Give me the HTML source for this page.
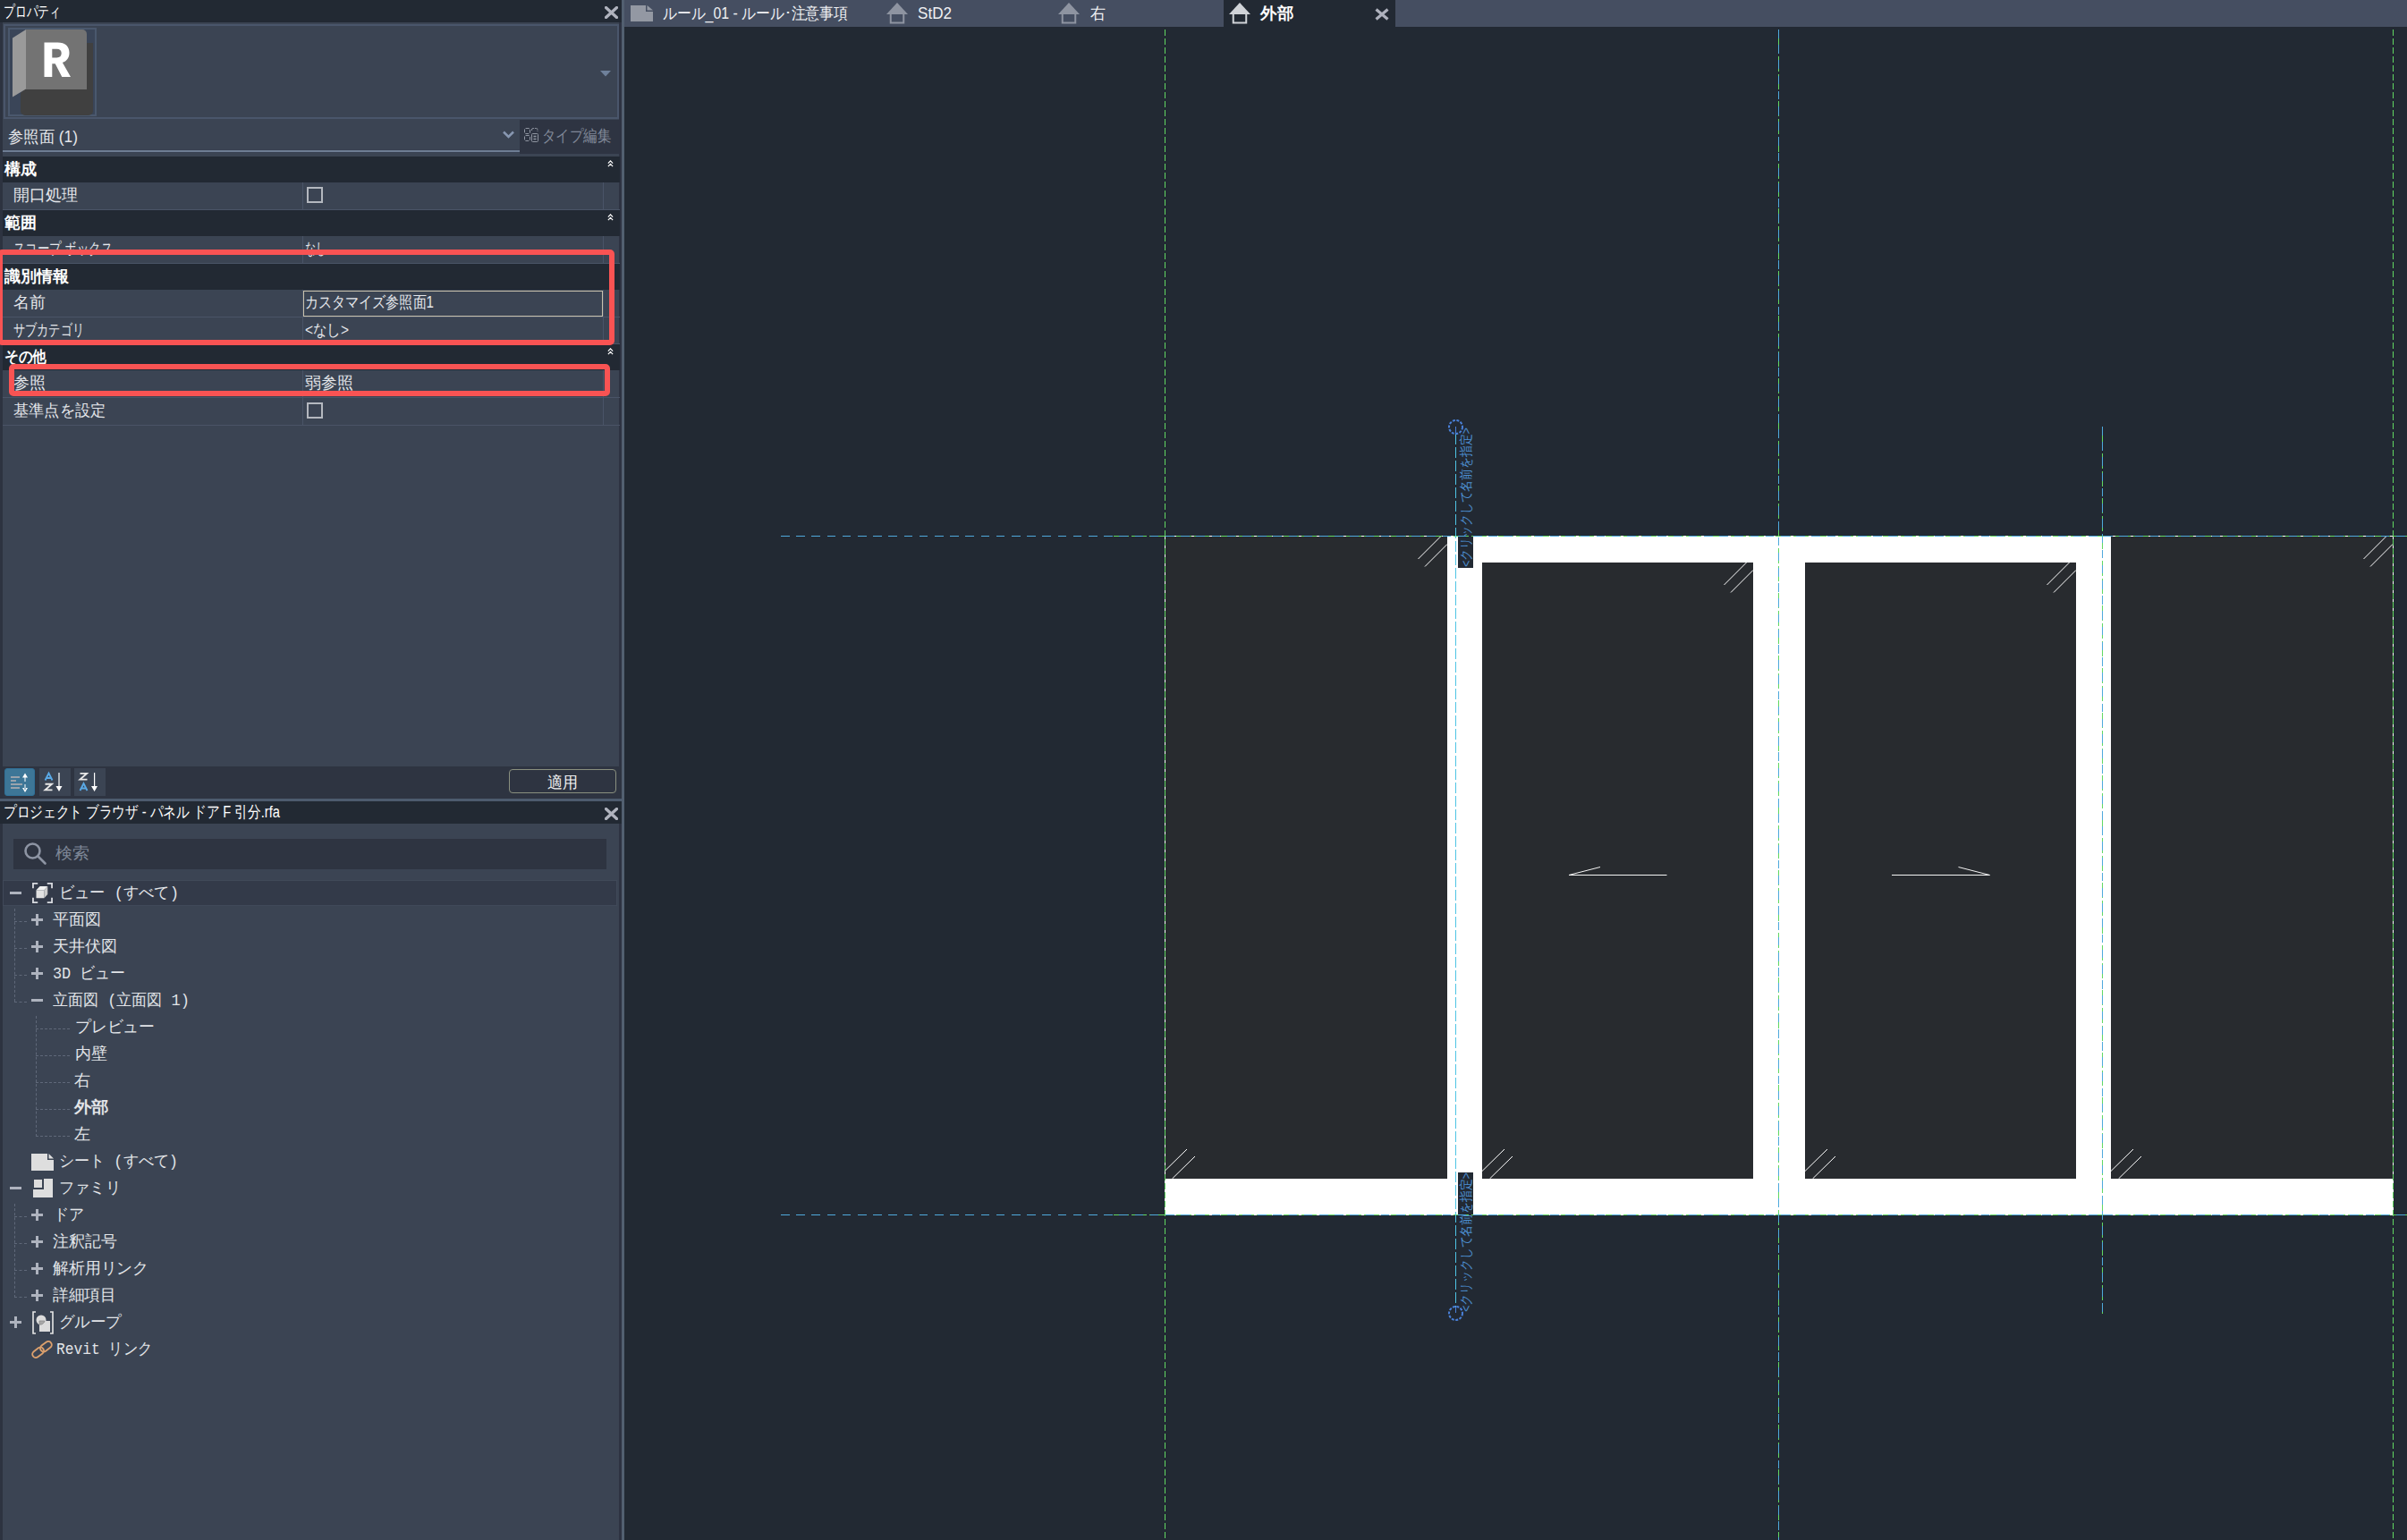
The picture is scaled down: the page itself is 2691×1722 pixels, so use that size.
<!DOCTYPE html>
<html lang="ja"><head><meta charset="utf-8"><title>Revit</title>
<style>
*{box-sizing:border-box;margin:0;padding:0}
html,body{width:2691px;height:1722px;overflow:hidden;background:#222933}
body{position:relative;font-family:"Liberation Sans",sans-serif;font-size:18px;color:#e4e6ea}
.abs,.abs *{position:absolute}
.t{white-space:nowrap;line-height:26px;height:26px;transform-origin:0 50%}
.b{font-weight:bold;color:#fff}
.m{font-family:"Liberation Mono","Liberation Sans",monospace;color:#e2e4e8}
.dark{background:#222933}
.hdr{left:3px;width:690px;height:29px;background:#222933}
.chev{left:676px;top:3px;width:7px;height:10px}
.row{left:3px;width:690px;border-bottom:1px solid #4a5467}
.row i{top:0;width:1px;height:30px;background:#4a5467}
.cb{width:18px;height:18px;border:2px solid #b4b8bf}
.pm{width:13px;height:13px}
.pm i{left:0;top:5px;width:13px;height:3px;background:#aeb3be}
.pm b{left:5px;top:0;width:3px;height:13px;background:#aeb3be}
.dv{width:0;border-left:1px dashed #5f6879}
.dh{height:0;border-top:1px dashed #5f6879}
</style></head><body>
<div class="abs" style="left:0;top:0;width:2691px;height:1722px;overflow:hidden">
<div style="left:0;top:0;width:698px;height:1722px;background:#3b4453;overflow:hidden">
<div style="left:0;top:0;width:3px;height:1722px;background:#2d3340"></div>
<div style="left:692px;top:0;width:3px;height:1722px;background:#2e3342"></div>
<div style="left:695px;top:0;width:3px;height:1722px;background:#525f70"></div>
<div class="dark" style="left:0;top:0;width:695px;height:25px"></div>
<div class="t" id="t0" style="left:4px;top:0px;transform:scaleX(0.711);color:#fff">プロパティ</div>
<svg style="left:676px;top:7px" width="15" height="14" viewBox="0 0 15 14"><path d="M1.500 1.500L13.500 12.500M13.500 1.500L1.500 12.500" stroke="#b0b3be" stroke-width="3.300" stroke-linecap="round"/></svg>
<div style="left:4px;top:27px;width:688px;height:106px;border:2px solid #4a566b"></div>
<div style="left:9px;top:31px;width:99px;height:99px;border:2px solid #4a586d;background:#3a4558"></div>
<svg style="left:9px;top:31px" width="99" height="99" viewBox="9 31 99 99">
 <path d="M27 100H97V48H104V124a5 5 0 0 1-5 5H28a5 5 0 0 1-5-5V104z" fill="#404040"/>
 <path d="M29 33H92a5 5 0 0 1 5 5V100H29z" fill="#737373"/>
 <path d="M14 42.500L29 33V99.500L14 108.500z" fill="#9a9a9a"/>
 <path d="M49.500 86V47.500H64.500c8.500 0 13 4.300 13 11.500c0 5.800-3 9.400-7.600 10.900L79 86H69.300L61.700 71.300H58.300V86zM58.300 64.500H63.500c3.400 0 5.200-1.700 5.200-4.900c0-3.200-1.800-4.800-5.200-4.800H58.300z" fill="#fff"/>
</svg>
<svg style="left:671px;top:79px" width="12" height="7" viewBox="0 0 12 7"><path d="M0 0H12L6 6.500z" fill="#6f819b"/></svg>
<div class="t" id="t1" style="left:9px;top:140px;transform:scaleX(0.963);">参照面 (1)</div>
<svg style="left:562px;top:146px" width="13" height="9" viewBox="0 0 13 9"><path d="M1 1.500L6.500 7L12 1.500" stroke="#8797b1" stroke-width="2.500" fill="none"/></svg>
<div style="left:3px;top:167px;width:578px;height:4px;background:#384051"></div><div style="left:3px;top:168px;width:578px;height:2px;background:#6e7d93"></div>
<div style="left:581px;top:134px;width:111px;height:38px;background:#2e3442"></div>
<svg style="left:585px;top:142px" width="18" height="18" viewBox="0 0 18 18" fill="none" stroke="#9096a2" stroke-width="1"><rect x="1.500" y="1.500" width="6" height="6" rx="1.500" stroke-dasharray="4 1"/><rect x="1.500" y="9.500" width="6" height="6" rx="1.500" stroke-dasharray="4 1"/><path d="M9.500 4V3a1.500 1.500 0 0 1 1.500-1.500h3.500a1.500 1.500 0 0 1 1.500 1.500v2" stroke-dasharray="4 1"/><rect x="9.500" y="7.500" width="7" height="9" rx="1"/><path d="M11.500 10.500H14.500M11.500 13.500H14.500" stroke-width="1.300"/></svg>
<div class="t" id="t2" style="left:606px;top:139px;transform:scaleX(0.856);color:#808898">タイプ編集</div>
<div class="hdr" style="top:175px"><svg class="chev" viewBox="0 0 8 10"><path d="M1 4.500L4 1.500L7 4.500M1 8.500L4 5.500L7 8.500" stroke="#fff" stroke-width="1.400" fill="none"/></svg></div>
<div class="t b" id="t3" style="left:5px;top:176px;">構成</div>
<div class="row" style="top:204px;height:31px"><i style="left:335px"></i><i style="left:671px"></i><div class="cb" style="left:340px;top:5px"></div></div>
<div class="t" id="t4" style="left:15px;top:205px;">開口処理</div>
<div class="hdr" style="top:235px"><svg class="chev" viewBox="0 0 8 10"><path d="M1 4.500L4 1.500L7 4.500M1 8.500L4 5.500L7 8.500" stroke="#fff" stroke-width="1.400" fill="none"/></svg></div>
<div class="t b" id="t5" style="left:5px;top:236px;">範囲</div>
<div class="row" style="top:264px;height:31px"><i style="left:335px"></i><i style="left:671px"></i></div>
<div class="t" id="t6" style="left:15px;top:265px;transform:scaleX(0.745);">スコープ ボックス</div>
<div class="t" id="t7" style="left:341px;top:265px;transform:scaleX(0.667);">なし</div>
<div class="hdr" style="top:295px"></div>
<div class="t b" id="t8" style="left:5px;top:296px;">識別情報</div>
<div class="row" style="top:324px;height:31px"><i style="left:335px"></i><i style="left:671px"></i></div>
<div class="t" id="t9" style="left:15px;top:325px;">名前</div>
<div class="t" id="t10" style="left:341px;top:325px;transform:scaleX(0.837);">カスタマイズ参照面1</div>
<div class="row" style="top:355px;height:30px"><i style="left:335px"></i><i style="left:671px"></i></div>
<div class="t" id="t11" style="left:15px;top:356px;transform:scaleX(0.731);">サブカテゴリ</div>
<div class="t" id="t12" style="left:341px;top:356px;transform:scaleX(0.859);">&lt;なし&gt;</div>
<div class="hdr" style="top:385px"><svg class="chev" viewBox="0 0 8 10"><path d="M1 4.500L4 1.500L7 4.500M1 8.500L4 5.500L7 8.500" stroke="#fff" stroke-width="1.400" fill="none"/></svg></div>
<div class="t b" id="t13" style="left:5px;top:386px;transform:scaleX(0.870);">その他</div>
<div class="row" style="top:414px;height:31px"><i style="left:335px"></i><i style="left:671px"></i></div>
<div class="t" id="t14" style="left:15px;top:415px;">参照</div>
<div class="t" id="t15" style="left:341px;top:415px;">弱参照</div>
<div class="row" style="top:445px;height:31px"><i style="left:335px"></i><i style="left:671px"></i><div class="cb" style="left:340px;top:5px"></div></div>
<div class="t" id="t16" style="left:15px;top:446px;transform:scaleX(0.954);">基準点を設定</div>
<div style="left:339px;top:325px;width:335px;height:29px;border:1px solid #c9c2ad"></div>
<div style="left:-3px;top:279px;width:690px;height:107px;border:6px solid #f95353;border-radius:5px"></div>
<div style="left:10px;top:407px;width:672px;height:36px;border:6px solid #f95353;border-radius:5px"></div>
<div style="left:3px;top:857px;width:692px;height:36px;background:#2e3441"></div>
<div style="left:0;top:893px;width:695px;height:3px;background:#4d5b6e"></div>
<div style="left:5px;top:859px;width:34px;height:31px;background:#3d7697;border:1px solid #2f7097;border-radius:3px"></div>
<div style="left:44px;top:859px;width:35px;height:31px;background:#3b4453"></div>
<div style="left:83px;top:859px;width:35px;height:31px;background:#3b4453"></div>
<svg style="left:5px;top:859px" width="113" height="31" viewBox="5 859 113 31">
 <g fill="#9aa3ac"><rect x="12" y="868" width="10" height="2"/><rect x="12" y="872" width="6" height="2"/><rect x="12" y="876" width="13" height="2"/><rect x="12" y="880" width="10" height="2"/></g>
 <g fill="#fff"><path d="M27.500 867h1v7h-1zM25 869.500L28 864.500L31 869.500zM27.500 877h1v6h-1zM25 881L28 886L31 881z"/></g>
 <g fill="#fff"><path d="M65.400 864h1.200v16h-1.200zM62.500 879H69.500L66 885z"/><path d="M105 864h1.200v16h-1.200zM102 879H109L105.600 885z"/></g>
 <g fill="none" stroke-width="1.900"><path d="M50.500 872.500L54.500 864.500L58.500 872.500M52 870H57" stroke="#5aa9e6"/><path d="M50.500 876.700H58L50.500 883.400H58.500" stroke="#e8e8e8"/>
 <path d="M89.500 864.900H97L89.500 871.600H97.500" stroke="#e8e8e8"/><path d="M89.500 884L93.500 876L97.500 884M91 881.500H96" stroke="#5aa9e6"/></g>
</svg>
<div style="left:569px;top:860px;width:120px;height:27px;border:1px solid #8a907f;border-radius:4px"></div>
<div class="t" id="t17" style="left:612px;top:862px;transform:scaleX(0.944);color:#f0f0f0">適用</div>
<div class="dark" style="left:0;top:896px;width:695px;height:25px"></div>
<div class="t" id="t18" style="left:4px;top:895px;transform:scaleX(0.815);color:#fff">プロジェクト ブラウザ - パネル ドア F 引分.rfa</div>
<svg style="left:676px;top:903px" width="15" height="14" viewBox="0 0 15 14"><path d="M1.500 1.500L13.500 12.500M13.500 1.500L1.500 12.500" stroke="#b0b3be" stroke-width="3.300" stroke-linecap="round"/></svg>
<div style="left:15px;top:938px;width:663px;height:34px;background:#2e3441"></div>
<svg style="left:26px;top:941px" width="27" height="27" viewBox="0 0 27 27" fill="none" stroke="#8d94a3" stroke-width="2.600"><circle cx="10.500" cy="10.500" r="8"/><path d="M16.500 16.500L24.500 24.500" stroke-linecap="round"/></svg>
<div class="t" id="t19" style="left:62px;top:941px;transform:scaleX(1.056);color:#7e8797">検索</div>
<div style="left:3px;top:984px;width:687px;height:29px;background:#333a49;border:1px solid #404959"></div>
<div class="pm" style="left:11px;top:992px"><i></i></div><svg style="left:36px;top:987px" width="23" height="23" viewBox="0 0 24 24"><path d="M1 6.500V1H6.500M17.500 1H23V6.500M23 17.500V23H17.500M6.500 23H1V17.500" fill="none" stroke="#d8dadf" stroke-width="1.900"/><path d="M4.700 8.700H14V18H4.700z" fill="#e2e2e2"/><path d="M4.700 8.700L9 4.200H18L14 8.700z" fill="#f2f2f2"/><path d="M14 8.700L18 4.200V13.500L14 18z" fill="#cdcdcd"/></svg>
<div class="t m" id="t20" style="left:66px;top:986px;transform:scaleX(0.954);">ビュー (すべて)</div>
<div class="pm" style="left:35px;top:1022px"><i></i><b></b></div><div class="t m" id="t21" style="left:59px;top:1016px;">平面図</div>
<div class="pm" style="left:35px;top:1052px"><i></i><b></b></div><div class="t m" id="t22" style="left:59px;top:1046px;">天井伏図</div>
<div class="pm" style="left:35px;top:1082px"><i></i><b></b></div><div class="t m" id="t23" style="left:59px;top:1076px;transform:scaleX(0.937);">3D ビュー</div>
<div class="pm" style="left:35px;top:1112px"><i></i></div><div class="t m" id="t24" style="left:59px;top:1106px;transform:scaleX(0.944);">立面図 (立面図 1)</div>
<div class="t m" id="t25" style="left:84px;top:1136px;transform:scaleX(0.989);">プレビュー</div>
<div class="t m" id="t26" style="left:84px;top:1166px;">内壁</div>
<div class="t m" id="t27" style="left:83px;top:1196px;">右</div>
<div class="t m b" id="t28" style="left:83px;top:1226px;transform:scaleX(1.083);">外部</div>
<div class="t m" id="t29" style="left:83px;top:1256px;">左</div>
<svg style="left:35px;top:1290px" width="25" height="19" viewBox="0 0 25 19"><path d="M0 0H18V7H25V19H0z" fill="#dedede"/><path d="M19.500 0L25 5.500H19.500z" fill="#dedede"/></svg>
<div class="t m" id="t30" style="left:66px;top:1286px;transform:scaleX(0.947);">シート (すべて)</div>
<div class="pm" style="left:11px;top:1322px"><i></i></div><svg style="left:37px;top:1318px" width="23" height="22" viewBox="0 0 23 22"><path d="M0 12H12V0H22V21H0z" fill="#dedede"/><rect x="1" y="1" width="9" height="9" fill="#dedede"/></svg>
<div class="t m" id="t31" style="left:66px;top:1316px;transform:scaleX(0.958);">ファミリ</div>
<div class="pm" style="left:35px;top:1352px"><i></i><b></b></div><div class="t m" id="t32" style="left:60px;top:1346px;transform:scaleX(0.944);">ドア</div>
<div class="pm" style="left:35px;top:1382px"><i></i><b></b></div><div class="t m" id="t33" style="left:59px;top:1376px;">注釈記号</div>
<div class="pm" style="left:35px;top:1412px"><i></i><b></b></div><div class="t m" id="t34" style="left:59px;top:1406px;transform:scaleX(0.991);">解析用リンク</div>
<div class="pm" style="left:35px;top:1442px"><i></i><b></b></div><div class="t m" id="t35" style="left:59px;top:1436px;transform:scaleX(0.986);">詳細項目</div>
<div class="pm" style="left:11px;top:1472px"><i></i><b></b></div><svg style="left:36px;top:1466px" width="24" height="26" viewBox="0 0 24 26"><path d="M4 1H1V25H4M20 1H23V25H20" fill="none" stroke="#e6e6e6" stroke-width="1.600"/><rect x="8" y="11" width="12" height="12" fill="#dcdcdc"/><circle cx="10" cy="10" r="5.500" fill="#dcdcdc"/><path d="M8 11H14A5 5 0 0 1 8 15z" fill="#a9a9a9" stroke="#8c8c8c" stroke-width=".8"/></svg>
<div class="t m" id="t36" style="left:66px;top:1466px;transform:scaleX(0.972);">グループ</div>
<svg style="left:35px;top:1499px" width="24" height="20" viewBox="0 0 24 20" fill="none" stroke="#dba06d" stroke-width="1.900"><g transform="rotate(-37 12 10)"><rect x="-0.500" y="6.200" width="14" height="7.600" rx="3.800"/><rect x="10.500" y="6.200" width="14" height="7.600" rx="3.800"/></g></svg>
<div class="t m" id="t37" style="left:63px;top:1496px;transform:scaleX(0.901);">Revit リンク</div>
<div class="dv" style="left:16px;top:1016px;height:104px"></div><div class="dh" style="left:16px;top:1030px;width:14px"></div><div class="dh" style="left:16px;top:1060px;width:14px"></div><div class="dh" style="left:16px;top:1090px;width:14px"></div><div class="dh" style="left:16px;top:1120px;width:14px"></div><div class="dv" style="left:40px;top:1136px;height:135px"></div><div class="dh" style="left:40px;top:1150px;width:38px"></div><div class="dh" style="left:40px;top:1180px;width:38px"></div><div class="dh" style="left:40px;top:1210px;width:38px"></div><div class="dh" style="left:40px;top:1240px;width:38px"></div><div class="dh" style="left:40px;top:1270px;width:38px"></div><div class="dv" style="left:16px;top:1346px;height:105px"></div><div class="dh" style="left:16px;top:1360px;width:14px"></div><div class="dh" style="left:16px;top:1390px;width:14px"></div><div class="dh" style="left:16px;top:1420px;width:14px"></div><div class="dh" style="left:16px;top:1450px;width:14px"></div>
</div>
<div style="left:698px;top:0;width:1993px;height:30px;background:#454e61"></div>
<div style="left:1368px;top:0;width:192px;height:30px;background:#222933"></div>
<svg style="left:705px;top:6px" width="25" height="18" viewBox="0 0 25 18"><path d="M0 0H17V7H25V18H0z" fill="#9398a3"/><path d="M18.500 0L25 5.500H18.500z" fill="#9398a3"/></svg>
<div class="t" id="t38" style="left:741px;top:2px;transform:scaleX(0.881);color:#f0f1f3">ルール_01 - ルール･注意事項</div>
<svg style="left:991px;top:3px" width="24" height="24" viewBox="0 0 24 24"><path d="M12 0L24 13H0z" fill="#8e94a1"/><path d="M4.750 12.500V22.500H19.250V12.500" fill="none" stroke="#8e94a1" stroke-width="2"/></svg>
<div class="t" id="t39" style="left:1026px;top:2px;transform:scaleX(0.949);color:#f0f1f3">StD2</div>
<svg style="left:1183px;top:3px" width="24" height="24" viewBox="0 0 24 24"><path d="M12 0L24 13H0z" fill="#8e94a1"/><path d="M4.750 12.500V22.500H19.250V12.500" fill="none" stroke="#8e94a1" stroke-width="2"/></svg>
<div class="t" id="t40" style="left:1219px;top:2px;transform:scaleX(0.944);color:#f0f1f3">右</div>
<svg style="left:1374px;top:3px" width="24" height="24" viewBox="0 0 24 24"><path d="M12 0L24 13H0z" fill="#d0d3d8"/><path d="M4.750 12.500V22.500H19.250V12.500" fill="none" stroke="#d0d3d8" stroke-width="2"/></svg>
<div class="t b" id="t41" style="left:1409px;top:2px;transform:scaleX(1.028);">外部</div>
<svg style="left:1537px;top:9px" width="16" height="14" viewBox="0 0 16 14"><path d="M1.500 1.500L14.500 12.500M14.500 1.500L1.500 12.500" stroke="#aeb1bd" stroke-width="3.200"/></svg>
<svg style="left:698px;top:30px" width="1993" height="1692" viewBox="698 30 1993 1692">
<g shape-rendering="crispEdges">
<rect x="1302" y="600" width="316" height="718" fill="#282b2f"/><rect x="2360" y="600" width="316" height="718" fill="#282b2f"/>
<path d="M1618 600H2360V1318H2676V1358H1302V1318H1618z" fill="#fff"/>
<rect x="1657" y="629" width="303" height="689" fill="#282b2f"/><rect x="2018" y="629" width="303" height="689" fill="#282b2f"/>
<path d="M1302.500 600V1358M2675.500 600V1358M1302 599.500H2676M1302 1358.500H2676" stroke="#fff" stroke-width="1" fill="none"/>
<rect x="1630" y="598" width="17" height="37" fill="#222933"/><rect x="1630" y="1311" width="17" height="49" fill="#222933"/>
<path d="M1302.500 33V1722M1988.500 33V1722M2675.500 33V1722M2350.500 477V1469M1235 599.500H2691M1235 1358.500H2691" stroke="#62d862" stroke-width="1" stroke-dasharray="7 3" fill="none"/>
<path d="M1988.500 33V1722M2350.500 477V1469M873 599.500H2691M873 1358.500H2691" stroke="#4fa9dc" stroke-width="1" stroke-dasharray="9.500 7.700" fill="none"/>
<path d="M1627.500 485V1461" stroke="#4fc4e4" stroke-width="1" stroke-dasharray="12 3" fill="none"/>
</g>
<path d="M1610.5 600L1585.5 625M1618 608.5L1593 633.5M1952.5 629L1927.5 654M1960 637.5L1935 662.5M2313.5 629L2288.5 654M2321 637.5L2296 662.5M2667.5 600L2642.5 625M2675 608.5L2650 633.5M1302 1309.5L1327 1285M1310.5 1318L1336 1293M1657 1309.5L1682 1285M1665.5 1318L1691 1293M2018 1309.5L2043 1285M2026.5 1318L2052 1293M2360 1309.5L2385 1285M2368.5 1318L2394 1293" stroke="#fff" stroke-width="1" fill="none"/>
<path d="M1863.500 978.500H1754L1789 969.500M2115 978.500H2224.500L2189.500 969.500" stroke="#f4f4f4" stroke-width="1" fill="none"/>
<circle cx="1627.500" cy="477.500" r="7.500" fill="none" stroke="#4a80d8" stroke-width="2" stroke-dasharray="3 1.500"/><circle cx="1627.500" cy="1468.500" r="7.500" fill="none" stroke="#4a80d8" stroke-width="2" stroke-dasharray="3 1.500"/>
<path d="M1627.500 477V485M1627.500 1461V1468" stroke="#4a80d8" stroke-width="1"/>
</svg>
<div class="t rl" id="rl634" style="left:1638.500px;top:634px;font-size:15px;line-height:16px;height:16px;color:#4d8fd1;transform-origin:0 0;transform:rotate(-90deg) translate(0,-8px) scaleX(0.855)">&lt;クリックして名前を指定&gt;</div>
<div class="t rl" id="rl1467" style="left:1638.500px;top:1467px;font-size:15px;line-height:16px;height:16px;color:#4d8fd1;transform-origin:0 0;transform:rotate(-90deg) translate(0,-8px) scaleX(0.855)">&lt;クリックして名前を指定&gt;</div>
</div>
</body></html>
